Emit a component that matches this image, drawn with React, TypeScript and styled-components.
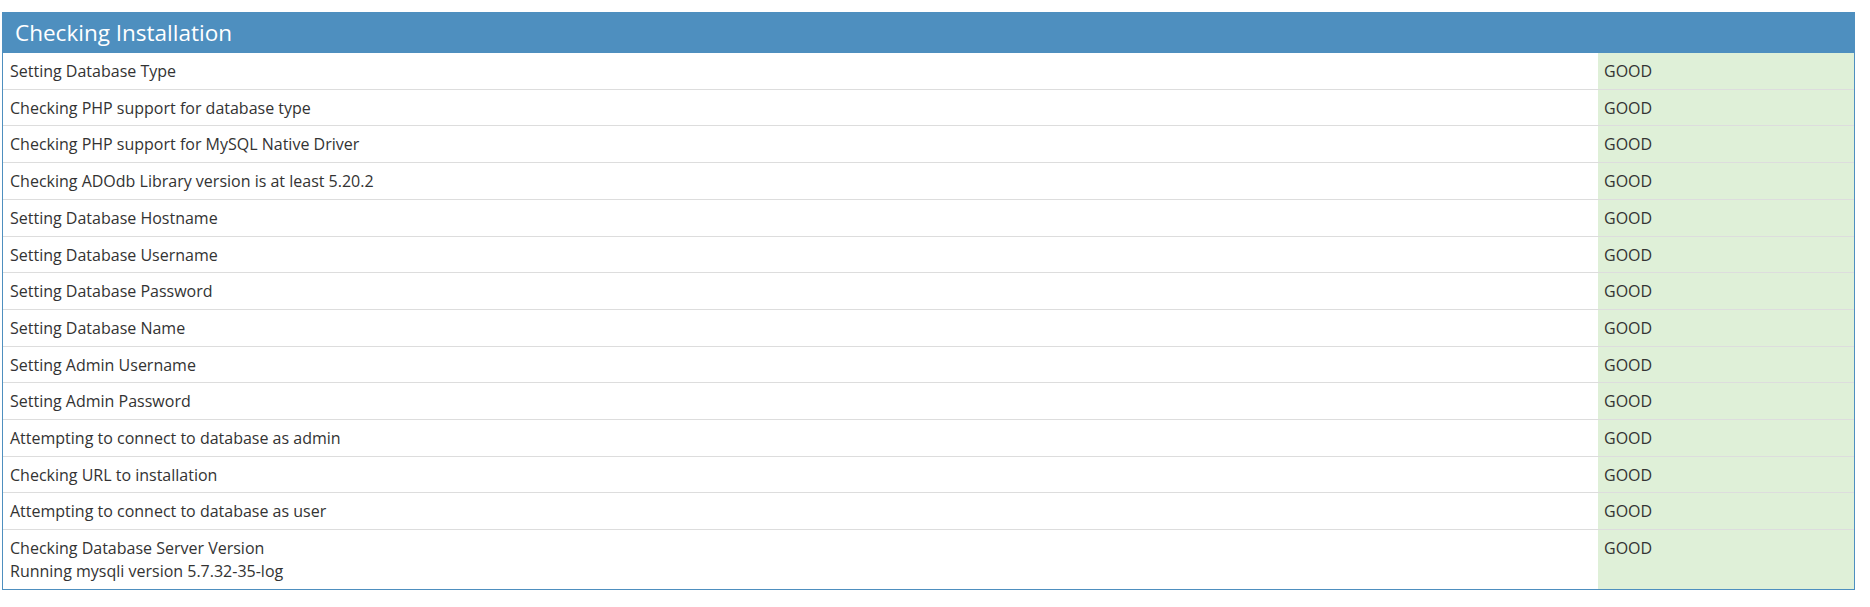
import styled, { createGlobalStyle } from "styled-components";

const GlobalStyle = createGlobalStyle`
    body {
        margin: 0;
        background: #ffffff;
        font-family: 'Open Sans', sans-serif;
        color: #333333;
    }
`

interface CheckItem {
    label: string;
    detail?: string;
    result: string;
}

const checks: CheckItem[] = [
    {label: "Setting Database Type", result: "GOOD"},
    {label: "Checking PHP support for database type", result: "GOOD"},
    {label: "Checking PHP support for MySQL Native Driver", result: "GOOD"},
    {label: "Checking ADOdb Library version is at least 5.20.2", result: "GOOD"},
    {label: "Setting Database Hostname", result: "GOOD"},
    {label: "Setting Database Username", result: "GOOD"},
    {label: "Setting Database Password", result: "GOOD"},
    {label: "Setting Database Name", result: "GOOD"},
    {label: "Setting Admin Username", result: "GOOD"},
    {label: "Setting Admin Password", result: "GOOD"},
    {label: "Attempting to connect to database as admin", result: "GOOD"},
    {label: "Checking URL to installation", result: "GOOD"},
    {label: "Attempting to connect to database as user", result: "GOOD"},
    {label: "Checking Database Server Version", detail: "Running mysqli version 5.7.32-35-log", result: "GOOD"},
]

export default function App() {
    return (
        <>
            <GlobalStyle/>
            <Page>
                <Panel>
                    <Header>Checking Installation</Header>
                    {checks.map((check, i) => (
                        <Row key={i} $first={i === 0}>
                            <Label>
                                {check.label}
                                {check.detail && <><br/>{check.detail}</>}
                            </Label>
                            <Result>{check.result}</Result>
                        </Row>
                    ))}
                </Panel>
            </Page>
        </>
    )
}

const Page = styled.div`
    padding: 12px 15px 17px 2px;
`

const Panel = styled.div`
    border: 1px solid #4e8fbf;
    display: flex;
    flex-direction: column;
`

const Header = styled.div`
    background: #4e8fbf;
    color: #ffffff;
    font-size: 22.5px;
    line-height: 40px;
    padding: 0 12px;
`

const Row = styled.div<{ $first: boolean }>`
    display: grid;
    grid-template-columns: 1fr 256px;
    border-top: ${props => props.$first ? "none" : "1px solid #dddddd"};
    font-size: 16px;
    line-height: 22.7px;
`

const Label = styled.div`
    padding: 7px 7px 6px 7px;
`

const Result = styled.div`
    background: #dff0d8;
    padding: 7px 6px 6px 6px;
`
